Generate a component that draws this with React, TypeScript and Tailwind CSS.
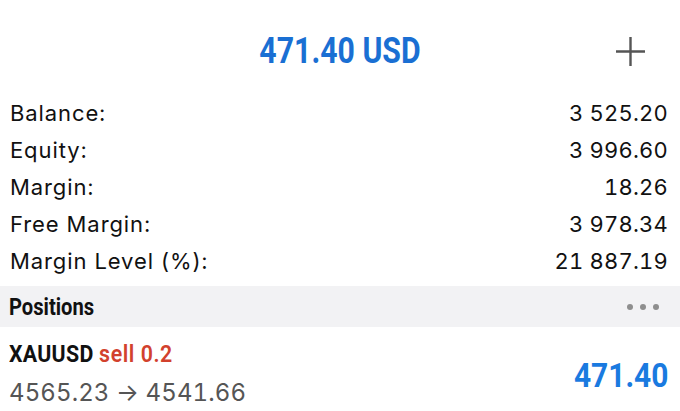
import React from "react";

const rows: [string, string][] = [
  ["Balance:", "3 525.20"],
  ["Equity:", "3 996.60"],
  ["Margin:", "18.26"],
  ["Free Margin:", "3 978.34"],
  ["Margin Level (%):", "21 887.19"],
];

// condensed headline face: Roboto squeezed horizontally
const cond = { fontFamily: 'Roboto, "Liberation Sans", sans-serif' };
const body = { fontFamily: 'Inter, "Liberation Sans", sans-serif' };

export default function App() {
  return (
    <div className="w-[680px] h-[411px] bg-white overflow-hidden text-[#111]" style={body}>
      {/* header */}
      <div className="relative h-[94px] flex items-center justify-center">
        <span
          className="inline-block origin-center scale-x-[0.84] text-[36px] leading-none font-bold text-[#1a6fd3] mt-[8px]"
          style={cond}
        >
          471.40 USD
        </span>
        <svg className="absolute left-[616px] top-[37px]" width="29" height="29" viewBox="0 0 29 29">
          <path d="M14.5 0v29M0 14.5h29" stroke="#555" strokeWidth="2.4" fill="none" />
        </svg>
      </div>

      {/* account figures */}
      <div className="flex flex-col px-[10px]">
        {rows.map(([k, v]) => (
          <div key={k} className="flex justify-between items-center h-[37px] text-[22px] leading-none">
            <span className="tracking-[0.9px]">{k}</span>
            <span className="pr-[2px] tabular-nums tracking-[0.2px]">{v}</span>
          </div>
        ))}
      </div>

      {/* positions section header */}
      <div className="mt-[7px] h-[41px] bg-[#f2f2f4] flex items-center justify-between pl-[9px]">
        <span
          className="inline-block origin-left scale-x-[0.84] text-[24px] leading-none font-bold"
          style={cond}
        >
          Positions
        </span>
        <div className="flex gap-[7px] pr-[21px]">
          <span className="w-[6px] h-[6px] rounded-full bg-[#8e8e8e]" />
          <span className="w-[6px] h-[6px] rounded-full bg-[#8e8e8e]" />
          <span className="w-[6px] h-[6px] rounded-full bg-[#8e8e8e]" />
        </div>
      </div>

      {/* position row */}
      <div className="flex items-center justify-between pl-[9px] pr-[12px] pt-[15px]">
        <div className="flex flex-col gap-[15px]">
          <div className="inline-block origin-left scale-x-[0.89] text-[24px] leading-[24px] font-bold whitespace-nowrap tracking-[0.3px]" style={cond}>
            XAUUSD <span className="text-[#d2412d] font-semibold tracking-[0.6px]">sell 0.2</span>
          </div>
          <div className="text-[24px] leading-[24px] text-[#555] tabular-nums tracking-[0.1px]">4565.23 → 4541.66</div>
        </div>
        <span
          className="inline-block origin-right scale-x-[0.88] text-[34px] leading-none font-bold text-[#1a7ae0] mt-[2px]"
          style={cond}
        >
          471.40
        </span>
      </div>
    </div>
  );
}
